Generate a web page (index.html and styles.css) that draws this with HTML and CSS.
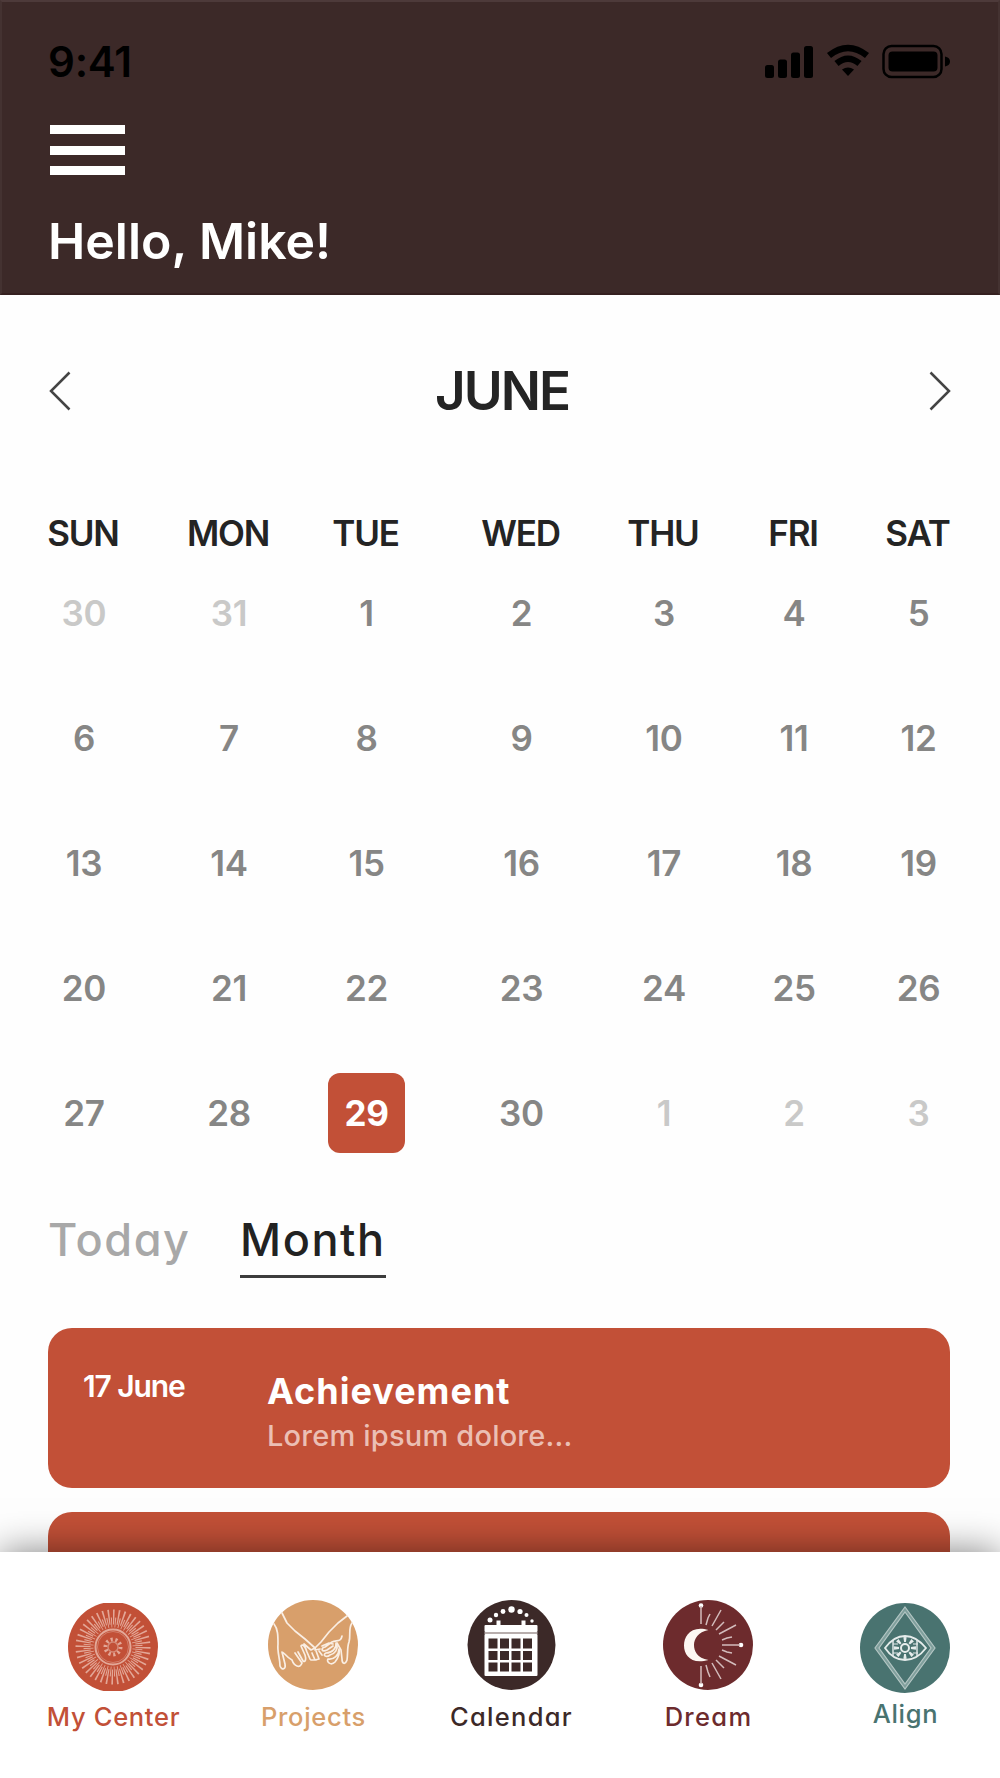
FILE: index.html
```html
<!DOCTYPE html>
<html lang="en">

<head>
    <meta charset="utf-8">
    <title>Calendar</title>
    <link rel="stylesheet" href="styles.css">
</head>

<body>
    <div class="app">
        <header class="header">
            <div class="status">
                <span class="time">9:41</span>
                <svg class="status-icons" width="186" height="36" viewBox="0 0 186 36">
                    <rect x="1" y="21" width="9" height="13" rx="2.5" />
                    <rect x="14" y="15.500" width="9" height="18.500" rx="2.500" />
                    <rect x="27" y="8.500" width="9" height="25.500" rx="2.500" />
                    <rect x="40" y="2" width="9" height="32" rx="2.500" />
                    <path d="M65 11.500Q84 -3.500 103 11.500M72.500 19.500Q84 10 95.500 19.500" fill="none" stroke="#000" stroke-width="6.500" />
                    <path d="M78 25.500Q84 21.500 90 25.500L84 32Z" />
                    <rect x="119.500" y="2" width="58" height="31" rx="8" fill="none" stroke="#000" stroke-width="2.500" />
                    <rect x="124.500" y="7.500" width="49" height="20" rx="4" />
                    <path d="M181 12.500q5 1 5 5t-5 5z" />
                </svg>
            </div>
            <div class="menu">
                <span></span>
                <span></span>
                <span></span>
            </div>
            <h1 class="hello">Hello, Mike!</h1>
        </header>

        <main class="main">
            <div class="month">
                <svg class="arrow" width="22" height="40" viewBox="0 0 22 40"><path d="M20.500 1.500L2 20L20.500 38.500" /></svg>
                <h2>JUNE</h2>
                <svg class="arrow" width="22" height="40" viewBox="0 0 22 40"><path d="M1.500 1.500L20 20L1.500 38.500" /></svg>
            </div>

            <div class="calendar week">
                <span>SUN</span><span>MON</span><span>TUE</span><span>WED</span><span>THU</span><span>FRI</span><span>SAT</span>
            </div>
            <div class="calendar days">
                <span class="out">30</span><span class="out">31</span><span>1</span><span>2</span><span>3</span><span>4</span><span>5</span>
                <span>6</span><span>7</span><span>8</span><span>9</span><span>10</span><span>11</span><span>12</span>
                <span>13</span><span>14</span><span>15</span><span>16</span><span>17</span><span>18</span><span>19</span>
                <span>20</span><span>21</span><span>22</span><span>23</span><span>24</span><span>25</span><span>26</span>
                <span>27</span><span>28</span><span class="active">29</span><span>30</span><span class="out">1</span><span class="out">2</span><span class="out">3</span>
            </div>

            <div class="tabs">
                <span class="tab today">Today</span>
                <span class="tab selected">Month</span>
            </div>

            <div class="events">
                <div class="event">
                    <div class="date">17 June</div>
                    <div>
                        <div class="title">Achievement</div>
                        <div class="text">Lorem ipsum dolore...</div>
                    </div>
                </div>
                <div class="event"></div>
            </div>
        </main>

        <nav class="nav">
            <a class="item center">
                <svg width="90" height="88" viewBox="0 0 90 88">
                    <circle cx="45" cy="44" r="45" fill="#c25037" />
                    <g fill="none" stroke="#e3a797">
                        <circle cx="45" cy="44" r="30" stroke-width="15" pathLength="400" stroke-dasharray="3 7" />
                        <circle cx="45" cy="44" r="24.500" stroke-width="10" pathLength="400" stroke-dasharray="2.500 7.500" stroke-dashoffset="-5" />
                        <circle cx="45" cy="44" r="17.500" stroke-width="2" />
                        <circle cx="45" cy="44" r="15.500" stroke-width="1" stroke="#d27e6a" />
                        <circle cx="45" cy="44" r="7.500" stroke-width="4" pathLength="100" stroke-dasharray="4.500 5.500" />
                        <circle cx="45" cy="44" r="5" stroke-width="1.500" stroke="#d58976" />
                    </g>
                </svg>
                <span>My Center</span>
            </a>
            <a class="item projects">
                <svg width="90" height="90" viewBox="0 0 90 90">
                    <circle cx="45" cy="45" r="45" fill="#d89f6b" />
                    <g fill="none" stroke="#faeee3" stroke-width="1.700" stroke-linejoin="round" stroke-linecap="round">
                        <path d="M14 13L19 23L27 31L37 39L47 48L53 42L61 32L70 23L79 16" />
                        <path d="M6 24C10 29 10 36 10 44C9 52 12 58 12 66C14 71 18 69 17 64L14 52C16 52 18 57 24 60C26 66 32 69 34 63L27 53" />
                        <path d="M30 52L35 61C38 63 38 58 37 55L33 46C35 43 38 48 39 52L42 59M36 44L43 50L47 48L51 59L47 60L44 53M47 50L52 49M43 60L48 60" />
                        <path d="M84 23C80 29 83 35 81 42C79 47 80 53 79 60C77 65 74 64 74 59L73 50L69 43" />
                        <path d="M74 36C73 42 69 40 64 42L57 47C52 48 54 53 59 50L65 46M68 43C69 48 64 53 58 53C54 55 58 58 62 55C67 54 70 49 69 45M71 49C71 55 66 60 60 59C58 62 63 66 67 62C71 57 72 53 71 49M54 46L61 43L65 44M51 51L54 55" />
                    </g>
                </svg>
                <span>Projects</span>
            </a>
            <a class="item cal">
                <svg width="90" height="90" viewBox="0 0 90 90">
                    <ellipse cx="45.500" cy="45" rx="44" ry="45" fill="#3c2928" />
                    <g fill="#fff">
                        <circle cx="24" cy="20" r="2.500" />
                        <circle cx="30" cy="15" r="2.200" />
                        <circle cx="37" cy="11.500" r="2.400" />
                        <circle cx="45.500" cy="9.500" r="3.200" />
                        <circle cx="54" cy="11.500" r="2.600" />
                        <circle cx="60.500" cy="15" r="2" />
                        <circle cx="66" cy="21" r="1.700" />
                        <rect x="30.500" y="20.500" width="4" height="6" />
                        <rect x="55.500" y="20.500" width="4" height="6" />
                        <rect x="18.500" y="25" width="53" height="7" rx="1" />
                        <rect x="18.500" y="34" width="53" height="42" rx="1" />
                    </g>
                    <path d="M18.500 33H71.500" stroke="#b8aead" stroke-width="2" />
                    <g fill="#3c2928">
                        <path d="M22.500 38.500h9v10h-9zM34 38.500h9v10h-9zM45.500 38.500h9v10h-9zM57 38.500h9v10h-9z" />
                        <path d="M22.500 51h9v9h-9zM34 51h9v9h-9zM45.500 51h9v9h-9zM57 51h9v9h-9z" />
                        <path d="M22.500 62.500h9v9h-9zM34 62.500h9v9h-9zM45.500 62.500h9v9h-9zM57 62.500h9v9h-9z" />
                    </g>
                </svg>
                <span>Calendar</span>
            </a>
            <a class="item dream">
                <svg width="90" height="90" viewBox="0 0 90 90">
                    <circle cx="45" cy="45" r="45" fill="#6d2b2d" />
                    <path d="M45.500 30C28 25 21 36 21 45.500C21 55 28 65 45.500 60C34 58 31 51 31 45C31 39 35 32 45.500 30Z" fill="#fcf7f2" />
                    <g fill="#fff">
                        <circle cx="38" cy="5.500" r="2.300" />
                        <circle cx="38" cy="85" r="2.300" />
                        <circle cx="78" cy="45" r="2.300" />
                    </g>
                    <g fill="none" stroke="#d3bcbc" stroke-width="1.500">
                        <path d="M38 6V24M38 66V84M59 45H77" />
                        <path d="M43 25L45 18L47 14M49 26L58 10M53 30L61 22M56 34L73 25M59 40L64 38L69 37" />
                        <path d="M43 65L45 72L47 77M49 63L58 79M53 60L61 68M56 56L73 65M59 50L64 52L69 53" />
                    </g>
                </svg>
                <span>Dream</span>
            </a>
            <a class="item align">
                <svg width="90" height="90" viewBox="0 0 90 90">
                    <circle cx="45" cy="45" r="45" fill="#497370" />
                    <path d="M45 6.500L73 45L45 83.500L17 45Z" fill="none" stroke="#7f9f9c" stroke-width="3" />
                    <g fill="none" stroke="#b4c6c4">
                        <path d="M45 4L75 45L45 86L15 45Z" stroke-width="1.200" />
                        <path d="M45 9L71 45L45 81L19 45Z" stroke-width="1.200" />
                    </g>
                    <g fill="none" stroke="#e5eceb" stroke-width="1.800">
                        <path d="M25 45Q34 33 45 33T66 45Q57 57 45 57T25 45Z" />
                        <path d="M33 37V53M57 37V53" stroke-width="1.400" />
                        <circle cx="45" cy="45" r="4" stroke-width="2" />
                        <circle cx="45" cy="45" r="8.500" stroke-width="5" pathLength="80" stroke-dasharray="4 6" stroke-dashoffset="2" />
                        <path d="M33 41H38M33 50H38M53 41H58M53 50H58" stroke-width="1.200" />
                    </g>
                </svg>
                <span>Align</span>
            </a>
        </nav>
    </div>
</body>

</html>
```

FILE: styles.css
```css
body {
    margin: 0;
    background: #fefefe;
    font-family: Inter, "Noto Sans", sans-serif;
    font-feature-settings: "cv11";
}

h1,
h2 {
    margin: 0;
}

.app {
    display: flex;
    flex-direction: column;
    width: 1000px;
    height: 1778px;
    overflow: hidden;
}

/* header */

.header {
    box-sizing: border-box;
    height: 295px;
    flex: none;
    padding: 34px 48px 0 46px;
    background: #3c2928;
    border: 2px solid #443231;
    border-top-color: #4d3a3a;
    border-bottom-color: #352020;
}

.status {
    display: flex;
    justify-content: space-between;
    align-items: center;
    height: 51px;
}

.time {
    font-size: 42px;
    font-weight: 600;
    letter-spacing: -0.2px;
}

.menu {
    display: flex;
    flex-direction: column;
    justify-content: space-between;
    width: 75px;
    height: 50px;
    margin: 38px 0 0 2px;
}

.menu span {
    height: 9px;
    background: #fff;
}

.hello {
    margin-top: 36px;
    color: #fff;
    font-size: 50px;
    font-weight: 600;
    line-height: 60px;
}

/* calendar */

.main {
    flex: 1;
    min-height: 0;
    overflow: hidden;
}

.month {
    display: flex;
    justify-content: space-between;
    align-items: center;
    height: 60px;
    padding: 66px 49px 0;
}

.month h2 {
    padding-left: 4px;
    color: #242424;
    font-size: 53px;
    font-weight: 600;
    letter-spacing: -2px;
}

.arrow path {
    fill: none;
    stroke: #444;
    stroke-width: 2.5;
}

.calendar {
    display: grid;
    grid-template-columns: 140px 150px 125px 185px 100px 160px 89px;
    justify-items: center;
    align-items: center;
    padding-left: 14px;
    font-size: 35px;
}

.week {
    height: 36px;
    margin-top: 91px;
    padding-left: 13px;
    color: #242424;
    font-weight: 600;
    letter-spacing: -1.2px;
}

.days {
    grid-auto-rows: 125px;
    margin-top: 2px;
    color: #868685;
    font-weight: 600;
    letter-spacing: -0.3px;
}

.days .out {
    color: #c9c9c8;
}

.days .active {
    width: 77px;
    height: 80px;
    border-radius: 12px;
    background: #c25037;
    color: #fff;
    font-weight: 700;
    line-height: 80px;
    text-align: center;
}

.tabs {
    display: flex;
    gap: 47px;
    margin: 32px 0 0 48px;
}

.tab {
    padding-bottom: 2px;
    color: #a8a8a8;
    font-size: 45px;
    font-weight: 500;
    letter-spacing: 1.6px;
    line-height: 66px;
}

.today {
    width: 145px;
}

.selected {
    border-bottom: 3px solid #3c3c3c;
    color: #222;
}

.event {
    display: grid;
    grid-template-columns: 184px 1fr;
    box-sizing: border-box;
    height: 160px;
    margin: 0 50px 24px 48px;
    padding: 38px 35px 0;
    border-radius: 24px;
    background: #c25037;
    color: #fff;
}

.events {
    margin-top: 50px;
}

.date {
    font-size: 30px;
    font-weight: 600;
    letter-spacing: -1.1px;
    line-height: 40px;
}

.title {
    margin-top: 1px;
    font-size: 36px;
    font-weight: 650;
    letter-spacing: 1px;
    line-height: 48px;
}

.text {
    color: #ebbfb4;
    font-size: 29px;
    font-weight: 500;
    letter-spacing: 0.2px;
    line-height: 41px;
}

/* bottom nav */

.nav {
    position: relative;
    display: grid;
    grid-template-columns: 190px 210px 186px 208px 186px;
    flex: none;
    height: 226px;
    padding-left: 18px;
    background: #fff;
    box-shadow: 0 0 36px rgba(0, 0, 0, 0.5);
}

.item {
    display: flex;
    flex-direction: column;
    align-items: center;
    padding-top: 48px;
    font-size: 25.5px;
    font-weight: 450;
    line-height: 30px;
}

.item span {
    margin-top: 12px;
    padding-left: 1px;
    letter-spacing: 0.7px;
}

.center {
    padding-top: 51px;
    color: #c25037;
}

.center span {
    margin-top: 11px;
}

.projects {
    color: #d89f6b;
}

.cal {
    color: #3c2928;
}

.dream {
    color: #6d2b2d;
}

.cal span,
.dream span {
    letter-spacing: 1.3px;
}

.align {
    padding-top: 51px;
    color: #497370;
}

.align span {
    margin-top: 6px;
}
```
